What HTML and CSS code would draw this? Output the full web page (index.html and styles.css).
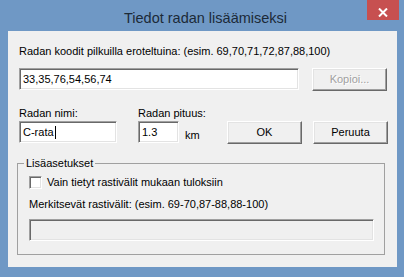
FILE: index.html
```html
<!DOCTYPE html>
<html lang="fi">
<head>
<meta charset="utf-8">
<title>Tiedot radan lisäämiseksi</title>
<link rel="stylesheet" href="styles.css">
</head>
<body>
<div class="window">
  <div class="titlebar">
    <span class="title">Tiedot radan lisäämiseksi</span>
    <span class="close" aria-label="Sulje">
      <svg width="10" height="9" viewBox="0 0 10 9"><path d="M1 0.5 L9 8.5 M9 0.5 L1 8.5" stroke="#fff" stroke-width="2" fill="none"/></svg>
    </span>
  </div>
  <div class="content">
    <div class="label codes-label">Radan koodit pilkuilla eroteltuina: (esim. 69,70,71,72,87,88,100)</div>
    <div class="row-codes">
      <div class="field field-codes">33,35,76,54,56,74</div>
      <div class="btn btn-copy disabled">Kopioi...</div>
    </div>
    <div class="row-main">
      <div class="label name-label">Radan nimi:</div>
      <div class="label len-label">Radan pituus:</div>
      <div class="field field-name">C-rata<span class="caret"></span></div>
      <div class="len">
        <div class="field field-len">1.3</div>
        <span class="unit">km</span>
      </div>
      <div class="btn btn-ok">OK</div>
      <div class="btn btn-cancel">Peruuta</div>
    </div>
    <fieldset class="group">
      <legend>Lisäasetukset</legend>
      <div class="check-row"><span class="checkbox"></span><span class="label">Vain tietyt rastivälit mukaan tuloksiin</span></div>
      <div class="label intervals-label">Merkitsevät rastivälit: (esim. 69-70,87-88,88-100)</div>
      <div class="field field-disabled"></div>
    </fieldset>
  </div>
</div>
</body>
</html>
```

FILE: styles.css
```css
* { box-sizing: border-box; }
html, body { margin: 0; padding: 0; }
body {
  background: #6f98c5;
  font-family: "Liberation Sans", Arial, sans-serif;
  font-size: 11px;
  color: #000;
}
.window {
  width: 404px;
  height: 277px;
  background: #6f98c5;
  display: flex;
  flex-direction: column;
}
.titlebar {
  height: 31px;
  display: grid;
  grid-template-columns: 1fr auto 1fr;
  padding-left: 7px;
}
.title {
  grid-column: 2;
  font-size: 14.5px;
  line-height: 18px;
  padding-top: 9px;
  color: #1c2a38;
  white-space: nowrap;
}
.close {
  grid-column: 3;
  justify-self: end;
  align-self: start;
  margin-right: 5px;
  width: 32px;
  height: 20px;
  background: #c75050;
  display: flex;
  align-items: center;
  justify-content: center;
  padding-top: 5px;
}
.close svg { display: block; }
.content {
  margin: 0 7px 0 8px;
  height: 236px;
  background: #f0f0f0;
  padding-left: 11px;
  padding-top: 14px;
}
.label {
  line-height: 13px;
  white-space: nowrap;
}
.codes-label { margin-bottom: 10px; }
.row-codes {
  display: flex;
  align-items: flex-start;
  height: 23px;
}
.field {
  height: 22px;
  background: #fff;
  border: 1px solid;
  border-color: #a0a0a0 #fff #fff #a0a0a0;
  box-shadow: inset 1px 1px 0 #696969, inset -1px -1px 0 #e3e3e3;
  display: flex;
  align-items: center;
  padding: 0 2px 0 3px;
  line-height: 13px;
  white-space: nowrap;
}
.field-codes { width: 280px; }
.btn {
  width: 75px;
  height: 23px;
  background: #f0f0f0;
  border: 1px solid;
  border-color: #fff #696969 #696969 #fff;
  box-shadow: inset -1px -1px 0 #a0a0a0, inset 1px 1px 0 #e3e3e3;
  display: flex;
  align-items: center;
  justify-content: center;
  line-height: 13px;
}
.btn.disabled {
  color: #a0a0a0;
  text-shadow: 1px 1px 0 #fff;
}
.btn-copy { margin-left: 13px; }
.row-main {
  margin-top: 16px;
  display: grid;
  grid-template-columns: 119px 89px 86px 75px;
  grid-template-rows: 14px 23px;
  align-items: start;
}
.name-label { grid-column: 1; grid-row: 1; }
.len-label { grid-column: 2; grid-row: 1; }
.field-name { grid-column: 1; grid-row: 2; width: 98px; }
.len { grid-column: 2; grid-row: 2; }
.caret {
  display: inline-block;
  width: 1px;
  height: 13px;
  background: #000;
  margin-left: 1px;
}
.len {
  display: flex;
  align-items: flex-end;
  height: 22px;
}
.field-len { width: 41px; }
.unit {
  margin-left: 6px;
  line-height: 13px;
  padding-bottom: 1px;
}
.btn-ok { grid-column: 3; grid-row: 2; }
.btn-cancel { grid-column: 4; grid-row: 2; }
.group {
  margin: 13px 0 0 -2px;
  width: 368px;
  min-width: 0;
  padding: 0 10px 13px 11px;
  border: 1px solid #a0a0a0;
}
.group legend {
  margin-left: -5px;
  padding: 0 2px;
  line-height: 13px;
}
.check-row {
  margin-top: 6px;
  display: flex;
  align-items: center;
  gap: 5px;
  height: 13px;
}
.checkbox {
  width: 13px;
  height: 13px;
  background: #fff;
  border: 1px solid;
  border-color: #a0a0a0 #fff #fff #a0a0a0;
  box-shadow: inset 1px 1px 0 #696969, inset -1px -1px 0 #e3e3e3;
}
.intervals-label { margin-top: 9px; margin-bottom: 8px; }
.field-disabled {
  width: 345px;
  background: #f0f0f0;
}
```
